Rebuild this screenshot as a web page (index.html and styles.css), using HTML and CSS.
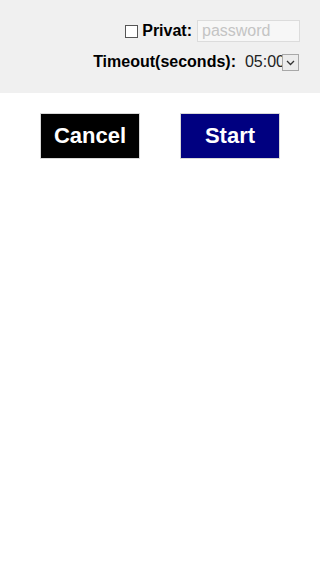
FILE: index.html
```html
<!DOCTYPE html>
<html>
<head>
<meta charset="utf-8">
<link rel="stylesheet" href="styles.css">
</head>
<body>
<div class="header">
  <div class="row">
    <span class="checkbox"></span>
    <span class="label">Privat:</span>
    <input class="password" type="text" placeholder="password">
  </div>
  <div class="row">
    <span class="label">Timeout(seconds):</span>
    <span class="select">
      <span class="select-value">05:00</span>
      <span class="select-arrow"><svg width="9" height="6" viewBox="0 0 9 6"><path d="M1 1 L4.5 4.5 L8 1" fill="none" stroke="#333" stroke-width="1.3"/></svg></span>
    </span>
  </div>
</div>
<div class="buttons">
  <div class="btn cancel">Cancel</div>
  <div class="btn start">Start</div>
</div>
</body>
</html>
```
FILE: styles.css
```css
html, body {
  margin: 0;
  padding: 0;
  background: #ffffff;
  font-family: "Liberation Sans", Arial, sans-serif;
}
.header {
  background: #f0f0f0;
  padding: 20px 20px 20px 20px;
  display: flex;
  flex-direction: column;
  align-items: flex-end;
  gap: 9px;
}
.row {
  display: flex;
  align-items: center;
  height: 22px;
}
.checkbox {
  width: 11px;
  height: 11px;
  border: 1px solid #555;
  background: #fff;
  margin-right: 4px;
  margin-top: 1px;
}
.label {
  font-weight: bold;
  font-size: 16px;
  color: #000;
}
.password {
  box-sizing: border-box;
  width: 103px;
  height: 22px;
  margin: 0 0 0 5px;
  padding: 0 4px;
  border: 1px solid #dcdcdc;
  background: #f7f7f7;
  font-family: "Liberation Sans", Arial, sans-serif;
  font-size: 16px;
  outline: none;
}
.password::placeholder {
  color: #c4c4c4;
}
.select {
  display: flex;
  align-items: center;
  margin-left: 9px;
  font-size: 16px;
  color: #222;
}
.select-value {
  line-height: 22px;
}
.select-arrow {
  box-sizing: border-box;
  width: 17px;
  height: 17px;
  margin-left: -3px;
  margin-right: 1px;
  border: 1px solid #a8a8a8;
  background: #ececec;
  display: flex;
  align-items: center;
  justify-content: center;
  padding-top: 2px;
}
.buttons {
  display: flex;
  justify-content: center;
  gap: 40px;
  margin-top: 20px;
}
.btn {
  box-sizing: border-box;
  width: 100px;
  height: 46px;
  border: 1px solid #d8d8d8;
  color: #fff;
  font-weight: bold;
  font-size: 22px;
  display: flex;
  align-items: center;
  justify-content: center;
}
.cancel {
  background: #000000;
}
.start {
  background: #000080;
}
```
